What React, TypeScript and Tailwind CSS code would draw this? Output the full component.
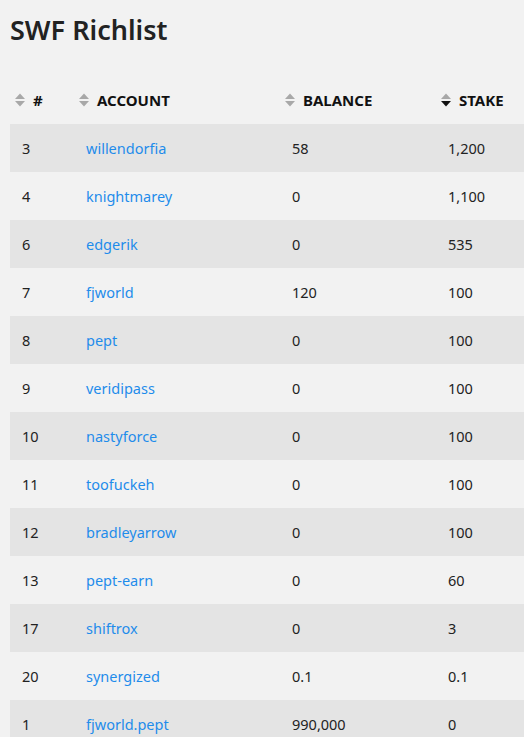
import React from "react";

const rows: [string, string, string, string][] = [
  ["3", "willendorfia", "58", "1,200"],
  ["4", "knightmarey", "0", "1,100"],
  ["6", "edgerik", "0", "535"],
  ["7", "fjworld", "120", "100"],
  ["8", "pept", "0", "100"],
  ["9", "veridipass", "0", "100"],
  ["10", "nastyforce", "0", "100"],
  ["11", "toofuckeh", "0", "100"],
  ["12", "bradleyarrow", "0", "100"],
  ["13", "pept-earn", "0", "60"],
  ["17", "shiftrox", "0", "3"],
  ["20", "synergized", "0.1", "0.1"],
  ["1", "fjworld.pept", "990,000", "0"],
];

function SortIcon({ active }: { active?: boolean }) {
  return (
    <svg width="10" height="14" viewBox="0 0 10 14" className="shrink-0">
      <polygon points="0,6 10,6 5,0.5" fill="#a8a8a8" />
      <polygon points="0,8 10,8 5,13.5" fill={active ? "#111" : "#a8a8a8"} />
    </svg>
  );
}

const cols = "grid grid-cols-[64px_206px_156px_1fr]";

export default function App() {
  return (
    <div
      className="min-h-[737px] bg-[#f2f2f2] pl-[10px] text-[#222]"
      style={{ fontFamily: '"Noto Sans", "Open Sans", sans-serif' }}
    >
      <h1 className="pt-[11px] text-[27px] font-semibold leading-[38px] text-[#222]">SWF Richlist</h1>
      <div className={`${cols} mt-[27px] h-[48px] items-center text-[15px] font-bold text-[#111]`}>
        {["#", "ACCOUNT", "BALANCE", "STAKE"].map((h, i) => (
          <div key={h} className="flex items-center gap-[8px] pl-[5px]">
            <SortIcon active={i === 3} />
            <span>{h}</span>
          </div>
        ))}
      </div>
      {rows.map((r, i) => (
        <div
          key={r[0] + r[1]}
          className={`${cols} h-[48px] items-center pt-[1px] text-[14.5px] ${i % 2 === 0 ? "bg-[#e4e4e4]" : "bg-[#f2f2f2]"}`}
        >
          <div className="pl-[12px]">{r[0]}</div>
          <div className="pl-[12px] text-[#1f8ceb]">{r[1]}</div>
          <div className="pl-[12px]">{r[2]}</div>
          <div className="pl-[12px]">{r[3]}</div>
        </div>
      ))}
    </div>
  );
}
